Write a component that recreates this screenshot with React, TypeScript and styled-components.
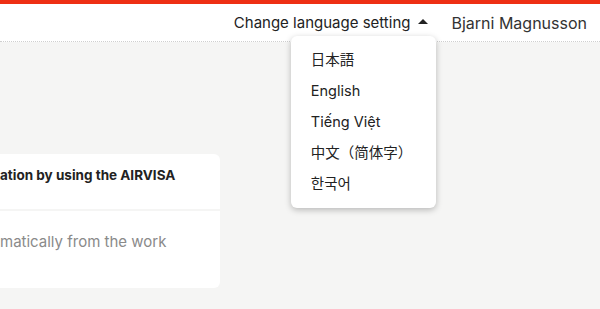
import styled, { createGlobalStyle } from 'styled-components'

const GlobalStyle = createGlobalStyle`
  html, body {
    margin: 0;
    padding: 0;
    background: #f5f5f4;
    font-family: Inter, "Noto Sans", "Noto Sans CJK JP", sans-serif;
    color: #222;
    overflow: hidden;
  }
`

const Page = styled.div`
  width: 600px;
  height: 309px;
  overflow: hidden;
`

const TopStripe = styled.div`
  height: 4px;
  background: #ee2f14;
`

const Header = styled.header`
  height: 37px;
  background: #fff;
  border-bottom: 1px dotted #cfcfcf;
  display: flex;
  align-items: center;
  justify-content: flex-end;
  padding-right: 13px;
  gap: 23px;
`

const LangToggle = styled.div`
  position: relative;
  display: flex;
  align-items: center;
  gap: 8px;
  font-size: 15px;
  color: #222;
`

const Caret = styled.span`
  width: 0;
  height: 0;
  border-left: 5px solid transparent;
  border-right: 5px solid transparent;
  border-bottom: 5px solid #222;
  margin-bottom: 2px;
`

const UserName = styled.div`
  font-size: 16px;
  color: #333;
`

const Menu = styled.ul`
  position: absolute;
  top: 23px;
  left: 57px;
  width: 145px;
  margin: 0;
  padding: 8px 0 9px;
  list-style: none;
  background: #fff;
  border-radius: 6px;
  box-shadow: 0 2px 6px rgba(0, 0, 0, 0.25);
  z-index: 2;
`

const MenuItem = styled.li`
  height: 31px;
  line-height: 31px;
  padding-left: 20px;
  font-size: 14.5px;
  color: #222;
`

const Main = styled.main`
  padding-top: 112px;
`

const Card = styled.section`
  width: 230px;
  margin-left: -10px;
  background: #fff;
  border-radius: 6px;
  overflow: hidden;
`

const CardTitle = styled.div`
  height: 57px;
  padding: 13px 0 0 10px;
  box-sizing: border-box;
  font-size: 13.5px;
  font-weight: 700;
  color: #222;
  white-space: nowrap;
  border-bottom: 2px solid #f5f5f4;
`

const CardBody = styled.div`
  height: 77px;
  padding: 21px 0 0 10px;
  box-sizing: border-box;
  font-size: 15px;
  color: #8a8a8a;
  white-space: nowrap;
`

const languages = ['日本語', 'English', 'Tiếng Việt', '中文（简体字）', '한국어']

export default function App() {
  return (
    <Page>
      <GlobalStyle />
      <TopStripe />
      <Header>
        <LangToggle>
          Change language setting
          <Caret />
          <Menu>
            {languages.map((lang) => (
              <MenuItem key={lang}>{lang}</MenuItem>
            ))}
          </Menu>
        </LangToggle>
        <UserName>Bjarni Magnusson</UserName>
      </Header>
      <Main>
        <Card>
          <CardTitle>ation by using the AIRVISA</CardTitle>
          <CardBody>matically from the work</CardBody>
        </Card>
      </Main>
    </Page>
  )
}
